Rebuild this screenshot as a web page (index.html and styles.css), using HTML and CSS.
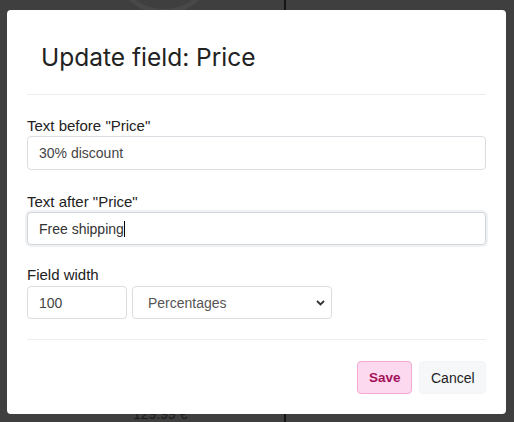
FILE: index.html
```html
<!DOCTYPE html>
<html>
<head>
<meta charset="utf-8">
<link rel="stylesheet" href="styles.css">
</head>
<body>
<div class="page">
  <div class="bg-circle"></div>
  <div class="bg-line bg-line-top"></div>
  <div class="bg-line bg-line-bottom"></div>
  <div class="bg-price">129.99 €</div>
</div>
<div class="modal">
  <div class="modal-header">
    <h2 class="modal-title">Update field: Price</h2>
  </div>
  <div class="modal-body">
    <div class="group">
      <label class="label">Text before "Price"</label>
      <div class="field">30% discount</div>
    </div>
    <div class="group">
      <label class="label">Text after "Price"</label>
      <div class="field field-focus">Free shipping<span class="caret"></span></div>
    </div>
    <div class="group group-last">
      <label class="label">Field width</label>
      <div class="row">
        <div class="field field-num">100</div>
        <div class="field field-select">Percentages
          <svg class="chev" width="9" height="6" viewBox="0 0 9 6"><path d="M1 1 L4.5 4.5 L8 1" fill="none" stroke="#333" stroke-width="1.8"/></svg>
        </div>
      </div>
    </div>
  </div>
  <div class="modal-footer">
    <button class="btn btn-save">Save</button>
    <button class="btn btn-cancel">Cancel</button>
  </div>
</div>
</body>
</html>
```
FILE: styles.css
```css
html, body {
  margin: 0;
  padding: 0;
}
body {
  width: 514px;
  height: 422px;
  overflow: hidden;
  background: #3f3f3f;
  font-family: "Liberation Sans", Arial, sans-serif;
  position: relative;
}
.page {
  position: absolute;
  inset: 0;
}
.bg-circle {
  position: absolute;
  left: 112px;
  top: -90px;
  width: 94px;
  height: 94px;
  border: 5px solid #484848;
  border-radius: 50%;
}
.bg-line {
  position: absolute;
  left: 284px;
  width: 2px;
  background: #141414;
}
.bg-line-top { top: 0; height: 12px; }
.bg-line-bottom { top: 410px; height: 12px; }
.bg-price {
  position: absolute;
  left: 133px;
  top: 406px;
  font-size: 14px;
  color: #1c1c1c;
}
.modal {
  position: absolute;
  left: 7px;
  top: 10px;
  width: 499px;
  box-sizing: border-box;
  background: #fff;
  border-radius: 4px;
  padding: 0 20px 20px;
}
.modal-header {
  height: 85px;
  box-sizing: border-box;
  padding: 33px 14px 0;
  border-bottom: 1px solid #ebedef;
}
.modal-title {
  margin: 0;
  font-family: Inter, "Liberation Sans", sans-serif;
  font-weight: 400;
  font-size: 24.5px;
  line-height: 29px;
  color: #222;
}
.modal-body {
  padding: 23px 0 20px;
  border-bottom: 1px solid #ebedef;
}
.group {
  margin-bottom: 24px;
}
.group + .group {
  margin-bottom: 22px;
}
.group-last {
  margin-bottom: 0 !important;
}
.label {
  display: block;
  font-size: 15px;
  line-height: 16px;
  color: #222;
  margin-bottom: 2px;
}
.group-last .label {
  margin-bottom: 3px;
}
.field {
  box-sizing: border-box;
  height: 34px;
  border: 1px solid #dadde1;
  border-radius: 4px;
  padding: 0 11px;
  font-size: 14px;
  line-height: 32px;
  color: #444;
  background: #fff;
  display: flex;
  align-items: center;
}
.field-focus {
  height: 33px;
  border-color: #d2d5d9;
  box-shadow: 0 0 0 2px #f0f1f3;
  color: #333;
}
.caret {
  display: inline-block;
  width: 1px;
  height: 16px;
  background: #000;
}
.row {
  display: flex;
  gap: 5px;
}
.field-num {
  width: 100px;
  height: 33px;
}
.field-select {
  width: 200px;
  height: 33px;
  padding-left: 15px;
  justify-content: space-between;
  padding-right: 6px;
  color: #555;
}
.chev {
  display: block;
}
.modal-footer {
  display: flex;
  justify-content: flex-end;
  gap: 7px;
  padding-top: 21px;
}
.btn {
  height: 33px;
  box-sizing: border-box;
  border-radius: 4px;
  font-family: "Liberation Sans", Arial, sans-serif;
  font-size: 14px;
  padding: 0 11px;
  cursor: pointer;
}
.btn-save {
  width: 55px;
  background: #fcd9ee;
  border: 1px solid #f5a8d2;
  color: #a5105a;
  font-weight: 700;
  font-size: 13.5px;
}
.btn-cancel {
  width: 67px;
  background: #f6f7f9;
  border: 1px solid #f3f4f6;
  color: #222;
}
```
